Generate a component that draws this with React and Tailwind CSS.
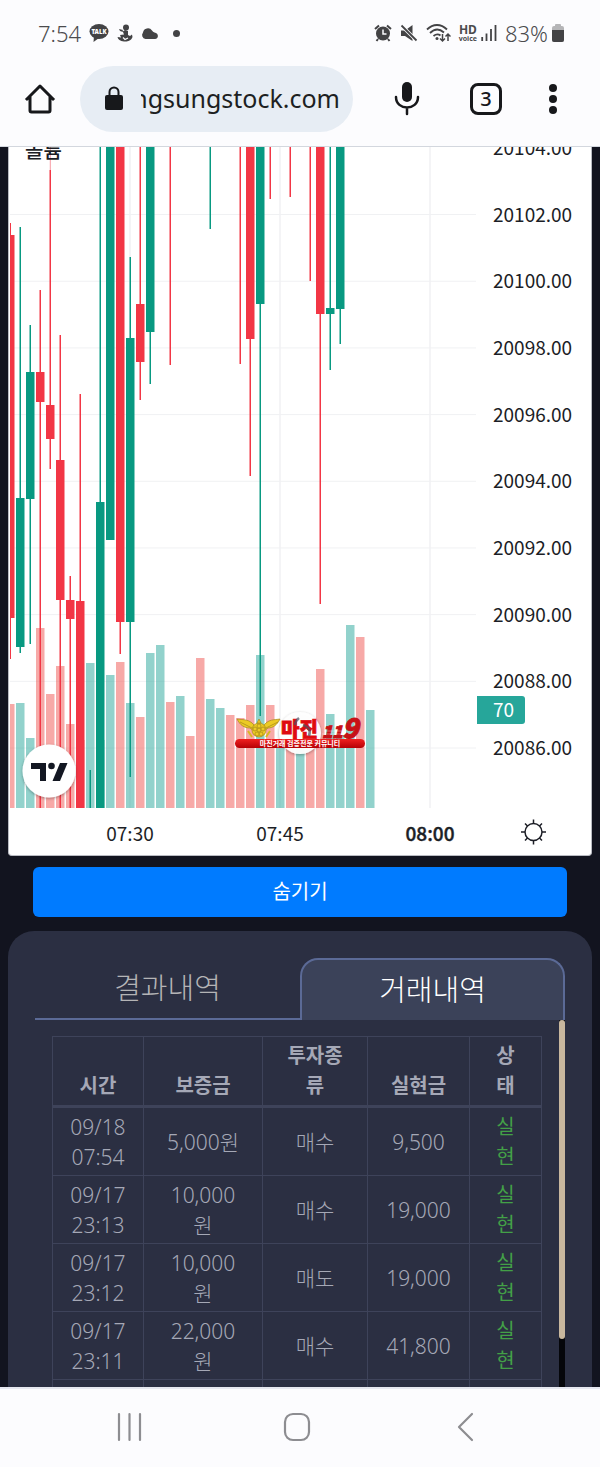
import React, { useState } from 'react';

const UP = '#089981';
const DOWN = '#f23645';

// x, direction, wick top, wick bottom, body top, body bottom
const candles = [
  [10, 'down', 223, 659, 235, 618],
  [20, 'up', 227, 653, 498, 647],
  [30, 'up', 325, 644, 372, 499],
  [40, 'down', 290, 808, 372, 402],
  [50, 'down', 170, 469, 405, 439],
  [60, 'down', 335, 808, 460, 600],
  [70, 'down', 576, 808, 600, 619],
  [80, 'down', 394, 808, 601, 808],
  [90, 'up', 770, 808],
  [100, 'up', 147, 808, 502, 808],
  [110, 'up', 147, 540, 147, 540],
  [120, 'down', 147, 654, 147, 622],
  [130, 'up', 257, 777, 338, 622],
  [140, 'down', 147, 400, 304, 362],
  [150, 'up', 147, 384, 147, 332],
  [170, 'down', 147, 365],
  [210, 'up', 147, 229],
  [240, 'down', 147, 364],
  [250, 'down', 147, 476, 147, 339],
  [260, 'up', 147, 716, 147, 304],
  [270, 'down', 147, 199],
  [290, 'down', 147, 197],
  [310, 'down', 147, 281],
  [320, 'down', 147, 604, 147, 314],
  [330, 'up', 147, 370, 308, 314],
  [340, 'up', 147, 344, 147, 309],
];

const volumes = [
  ['down', 704], ['up', 703], ['up', 738], ['down', 628], ['down', 694], ['down', 666],
  ['down', 724], ['down', 740], ['up', 663], ['up', 740], ['up', 675], ['down', 662],
  ['up', 703], ['down', 717], ['up', 653], ['up', 645], ['down', 702], ['up', 696],
  ['down', 736], ['down', 658], ['up', 699], ['up', 708], ['down', 715], ['down', 718],
  ['down', 705], ['up', 655], ['down', 705], ['up', 740], ['down', 740], ['up', 740],
  ['down', 740], ['down', 669], ['up', 714], ['up', 735], ['up', 625], ['down', 637],
  ['up', 710],
];

const prices = [20104, 20102, 20100, 20098, 20096, 20094, 20092, 20090, 20088, 20086];
const priceY = (price) => 748 - (price - 20086) * 33.34;

const trades = [
  { date: '09/18', time: '07:54', margin: '5,000원', type: '매수', amount: '9,500' },
  { date: '09/17', time: '23:13', margin: '10,000원', type: '매수', amount: '19,000' },
  { date: '09/17', time: '23:12', margin: '10,000원', type: '매도', amount: '19,000' },
  { date: '09/17', time: '23:11', margin: '22,000원', type: '매수', amount: '41,800' },
  { date: '09/17', time: '23:10', margin: '22,000원', type: '매수', amount: '41,800' },
];

const StatusBar = () => (
  <div className="flex h-[66px] items-center justify-between pl-[38px] pr-9 text-[#4b4b4d]">
    <div className="flex items-center gap-2">
      <span className="text-[22px] font-light">7:54</span>
      <svg width="20" height="20" viewBox="0 0 20 20" fill="#434345">
        <ellipse cx="10" cy="8.500" rx="9.500" ry="7.500" />
        <path d="M5 13 4.500 19 10 15Z" />
        <text x="10" y="11" textAnchor="middle" fontSize="6" fontWeight="900" fill="#fff">TALK</text>
      </svg>
      <svg width="16" height="18" viewBox="0 0 16 18" fill="#434345">
        <circle cx="9" cy="3.500" r="3" />
        <path d="M2 5 6 6 5 8 8 6 11 7 11 11 13 12 15 10.500 15.500 13C14 17 10 18 7 17.500 3 17 1 15.500.500 13L4 13.500 3 11 7 10.500 6 8 3 7Z" />
        <path d="M6 13.500 8 15.500 11 14" stroke="#fcfcfe" strokeWidth="1.200" fill="none" />
      </svg>
      <svg width="18" height="14" viewBox="0 0 18 14" fill="#434345">
        <path d="M4.500 13A4 4 0 0 1 2 6.500 5 5 0 0 1 11 4.500 4.500 4.500 0 0 0 13.500 6.500C18 7 18 13 14 13Z" />
      </svg>
      <span className="ml-1.5 size-[7px] rounded-full bg-[#434345]" />
    </div>
    <div className="flex items-center gap-2">
      <svg width="18" height="18" viewBox="0 0 18 18" fill="none" stroke="#434345">
        <circle cx="9" cy="9.500" r="7" fill="#434345" stroke="none" />
        <path d="M1 5 5 1.500M17 5 13 1.500M4 15 2.500 17M14 15 15.500 17" strokeWidth="2" />
        <path d="M9 5.500V10H12.500" stroke="#fcfcfe" strokeWidth="1.500" />
      </svg>
      <svg width="18" height="18" viewBox="0 0 18 18" fill="#434345">
        <path d="M1 6.500H5L12.500 1V17L5 12H1Z" />
        <path d="M1 1 17 17" stroke="#fcfcfe" strokeWidth="3.500" />
        <path d="M1.500 1.500 16.500 16.500" stroke="#434345" strokeWidth="1.800" />
      </svg>
      <div className="flex items-center gap-1">
        <svg width="25" height="20" viewBox="0 0 25 20" fill="none" stroke="#434345" strokeWidth="1.800">
          <path d="M1 6.500C7 .500 15 .500 21 6.500M4 10C8.500 5.500 13.500 5.500 18 9.500M7.500 13C10 11 12.500 11 14.500 12.500" />
          <circle cx="11" cy="15.500" r="1.500" fill="#434345" stroke="none" />
          <path d="M16.500 11V18M14 15.500 16.500 18 19 15.500M22 18V11M19.500 13.500 22 11 24.500 13.500" strokeWidth="1.500" />
        </svg>
        <span className="ml-1 flex flex-col items-center font-bold">
          <span className="text-[12px] leading-[11px]">HD</span>
          <span className="text-[7px] leading-[7px]">voice</span>
        </span>
        <svg width="16" height="18" viewBox="0 0 16 18" stroke="#434345" strokeWidth="1.800">
          <path d="M1.200 13V17M5.500 9.500V17M10 5V17" />
          <path d="M14.500 1V17" />
        </svg>
      </div>
      <span className="flex items-center gap-1 text-[22px] font-light">
        83%
        <svg width="12" height="18" viewBox="0 0 12 18">
          <rect x="3" y="0" width="6" height="4" rx="1" fill="#b5b5b7" />
          <rect x="0" y="2" width="12" height="16" rx="2" fill="#b5b5b7" />
          <path d="M0 6H12V16A2 2 0 0 1 10 18H2A2 2 0 0 1 0 16Z" fill="#434345" />
        </svg>
      </span>
    </div>
  </div>
);

const AddressBar = () => {
  const [url, setUrl] = useState('ngsungstock.com');

  return (
    <div className="flex items-center pl-6 pr-[43px]">
      <button type="button" aria-label="Home" className="size-8 shrink-0">
        <svg viewBox="0 0 32 32" fill="none" stroke="#17181b" strokeWidth="3" strokeLinejoin="round" strokeLinecap="square">
          <path d="M3 16 16 3 29 16M6 15V27.500Q6 29 7.500 29H24.500Q26 29 26 27.500V15" />
        </svg>
      </button>
      <div className="ml-6 flex h-[66px] min-w-0 flex-1 items-center rounded-full bg-[#e7edf4] pl-6 pr-[13px]">
        <svg viewBox="0 0 20 26" className="h-[26px] w-5 shrink-0" fill="#17181b">
          <rect x="1" y="9" width="18" height="15" rx="2" />
          <path d="M5.500 10V6A4.500 4.500 0 0 1 14.500 6V10" fill="none" stroke="#17181b" strokeWidth="2" />
        </svg>
        <div className="ml-[17px] flex min-w-0 flex-1 justify-end overflow-hidden">
          <input
            aria-label="Address"
            value={url}
            onChange={(e) => setUrl(e.target.value)}
            className="w-[240px] shrink-0 bg-transparent text-right text-[25px] text-[#1d1f22] outline-none"
          />
        </div>
      </div>
      <div className="ml-[38px] flex items-center gap-[47px]">
        <button type="button" aria-label="Voice search" className="h-9 w-8">
          <svg viewBox="0 0 32 36" fill="none" stroke="#17181b" strokeWidth="2.500" strokeLinecap="round">
            <rect x="11" y="1" width="10" height="20" rx="5" fill="#17181b" stroke="none" />
            <path d="M5 16C5 30 27 30 27 16M16 27V33" />
          </svg>
        </button>
        <button type="button" aria-label="Tabs" className="flex size-8 items-center justify-center rounded-lg border-[3px] border-[#17181b] text-xl font-medium text-[#17181b]">
          3
        </button>
        <button type="button" aria-label="Menu" className="flex flex-col gap-[3px]">
          <span className="size-2 rounded-full bg-[#17181b]" />
          <span className="size-2 rounded-full bg-[#17181b]" />
          <span className="size-2 rounded-full bg-[#17181b]" />
        </button>
      </div>
    </div>
  );
};

const MarginLogo = () => (
  <g>
    <circle cx="300" cy="733" r="21" fill="#fff" fillOpacity="0.95" filter="url(#soft)" />
    <g fill="#ecca24" stroke="#a3861a" strokeWidth="0.700">
      <path d="M254 725C249 719 244 720 237 719 240 725 244 728 250 728L254 731ZM264 725C269 719 274 720 280 719 277 725 273 728 268 728L264 731Z" />
      <path d="M240 722 252 728M278 722 266 728" fill="none" />
      <path d="M248 731 252 737M270 731 266 737" fill="none" stroke="#d9b820" strokeWidth="2" />
      <circle cx="259" cy="730" r="7" />
      <path d="M259 719 261 723 257 723Z" />
      <circle cx="259" cy="730" r="2" />
      <circle cx="259" cy="726" r="2" />
      <circle cx="263" cy="729" r="2" />
      <circle cx="261" cy="734" r="2" />
      <circle cx="257" cy="734" r="2" />
      <circle cx="255" cy="729" r="2" />
    </g>
    <text x="281" y="737" fontSize="20" fontWeight="900" fill="#df0a10" stroke="#df0a10" strokeWidth="0.800">마진</text>
    <path d="M295 725A10 10 0 0 1 299 718M303 725Q312 728 309 736" fill="none" stroke="#4b5163" strokeWidth="2.500" strokeOpacity="0.700" />
    <g fill="#c71116" stroke="#c71116" strokeWidth="1" fontStyle="italic" fontWeight="900">
      <text x="322" y="738" fontSize="17">11</text>
      <text x="342" y="738" fontSize="27">9</text>
    </g>
    <path d="M322 734H345M324 731H346" stroke="#fff" strokeWidth="0.600" strokeOpacity="0.600" />
    <rect x="235" y="739" width="130" height="9" rx="4.500" fill="url(#ribbon)" />
    <text x="300" y="746" textAnchor="middle" fontSize="7" fontWeight="700" fill="#fff">마진거래 검증전문 커뮤니티</text>
  </g>
);

const Chart = () => (
  <div className="overflow-hidden rounded-b-sm border-x border-b border-[#b9bbc2] bg-white">
    <svg viewBox="9 147 582 708" className="block w-full font-['Noto_Sans_CJK_KR',sans-serif]">
      <defs>
        <clipPath id="plot">
          <rect x="10" y="147" width="466" height="661" />
        </clipPath>
        <filter id="soft" x="-30%" y="-30%" width="160%" height="160%">
          <feDropShadow dx="0" dy="1" stdDeviation="1.500" floodOpacity="0.350" />
        </filter>
        <linearGradient id="ribbon" x1="0" y1="0" x2="0" y2="1">
          <stop offset="0" stopColor="#f02020" />
          <stop offset="1" stopColor="#b60006" />
        </linearGradient>
      </defs>

      <g clipPath="url(#plot)">
        <g stroke="#f0f1f3">
          {prices.slice(1).map((p) => <path key={p} d={`M10 ${priceY(p)}H476`} />)}
          {[130, 280, 430].map((x) => <path key={x} d={`M${x} 147V808`} strokeWidth="1.500" />)}
        </g>
        {volumes.map(([dir, top], i) => (
          <rect key={i} x={i * 10 + 6} y={top} width="8.500" height={808 - top} fill={dir === 'up' ? '#26a69a' : '#ef5350'} fillOpacity="0.500" />
        ))}
        <path d="M50.300 147V170" stroke={DOWN} strokeOpacity="0.500" />
        {candles.map(([x, dir, high, low, top, bottom]) => (
          <g key={x} fill={dir === 'up' ? UP : DOWN}>
            <rect x={x - 0.500} y={high} width="1.500" height={low - high} />
            {top && <rect x={x - 4} y={top} width="8.500" height={bottom - top} />}
          </g>
        ))}
      </g>

      <g fontSize="19" fill="#1c1e26">
        <text x="25" y="158" fontSize="20" fontWeight="500">볼륨</text>
        {prices.map((p) => <text key={p} x="493" y={priceY(p) + 7}>{p.toFixed(2)}</text>)}
        <g textAnchor="middle">
          <text x="130" y="841">07:30</text>
          <text x="280" y="841">07:45</text>
          <text x="430" y="841" fontWeight="500" stroke="#1c1e26" strokeWidth="0.400">08:00</text>
        </g>
        <path d="M477 696H522Q525 696 525 699V721Q525 724 522 724H477Z" fill="#26a69a" />
        <text x="493" y="717" fill="#fff">70</text>
      </g>

      <g fill="none" stroke="#1c1e26" strokeWidth="1.500">
        <circle cx="533.500" cy="832" r="8.500" />
        <path d="M533.500 819.500V823M533.500 841V844.500M521 832H525M542 832H546M525 823.500 527.500 826M539.500 838 542 840.500M542 823.500 539.500 826M527.500 838 525 840.500" />
      </g>

      <circle cx="49" cy="771" r="26.500" fill="#fff" filter="url(#soft)" />
      <g fill="#131722">
        <path d="M31 763H46V781H40V769H31Z" />
        <circle cx="51.500" cy="766" r="3.300" />
        <path d="M60 763H67.500L60 781H52.500Z" />
      </g>
      <MarginLogo />
    </svg>
  </div>
);

const TradeTable = () => {
  const head = 'border border-[#3e435a] px-3 py-1';
  const cell = 'border border-[#3e435a] px-2 pt-1 pb-[3px] text-center';

  return (
    <table className="w-full table-fixed border-collapse text-[#a5a8b6]">
      <colgroup>
        <col className="w-[91px]" />
        <col className="w-[119px]" />
        <col className="w-[105px]" />
        <col className="w-[102px]" />
        <col className="w-[72px]" />
      </colgroup>
      <thead className="align-bottom text-xl leading-[30px]">
        <tr className="border-b-[3px] border-[#3e435a]">
          <th className={head}>시간</th>
          <th className={head}>보증금</th>
          <th className={head}>투자종<br />류</th>
          <th className={head}>실현금</th>
          <th className={head}>상<br />태</th>
        </tr>
      </thead>
      <tbody className="text-[21px] font-light leading-[30px]">
        {trades.map((t) => (
          <tr key={t.time}>
            <td className={cell}>{t.date}<br />{t.time}</td>
            <td className={cell}>
              {t.margin.length > 6 ? <>{t.margin.slice(0, -1)}<br />원</> : t.margin}
            </td>
            <td className={cell}>{t.type}</td>
            <td className={cell}>{t.amount}</td>
            <td className={`${cell} text-xl/[30px] font-normal text-[#43a047]`}>실<br />현</td>
          </tr>
        ))}
      </tbody>
    </table>
  );
};

const HistoryPanel = () => {
  const [tab, setTab] = useState('trades');
  const active = 'rounded-t-[18px] border-2 border-b-0 border-[#5b6a96] bg-[#3b4259] text-white';
  const idle = 'border-b-2 border-[#5b6a96] text-[#b4b4b6]';

  return (
    <section className="flex min-h-0 flex-1 flex-col rounded-t-[26px] bg-[#2b2f42] px-[27px] pt-[27px]">
      <div role="tablist" className="grid h-[62px] shrink-0 grid-cols-2 text-[29px] font-light">
        <button type="button" role="tab" aria-selected={tab === 'results'} onClick={() => setTab('results')} className={tab === 'results' ? active : idle}>
          결과내역
        </button>
        <button type="button" role="tab" aria-selected={tab === 'trades'} onClick={() => setTab('trades')} className={tab === 'trades' ? active : idle}>
          거래내역
        </button>
      </div>
      <div className="flex min-h-0 flex-1 overflow-hidden">
        <div className="flex-1 px-[17px] pt-4">
          <TradeTable />
        </div>
        <div className="w-[7px] bg-[#05060a]">
          <div className="h-[87%] rounded-full bg-[#c8b79e]" />
        </div>
      </div>
    </section>
  );
};

const NavBar = () => (
  <nav className="grid h-20 shrink-0 grid-cols-3 place-items-center border-t-2 border-[#e6e8f0] bg-[#fcfcfe] pb-[3px] pl-[45px] pr-[51px] text-[#8d8d91]">
    <button type="button" aria-label="Recents">
      <svg width="28" height="30" viewBox="0 0 28 30" stroke="currentColor" strokeWidth="2.200" strokeLinecap="round">
        <path d="M4 2V28M14.500 2V28M25 2V28" />
      </svg>
    </button>
    <button type="button" aria-label="Home screen">
      <svg width="28" height="30" viewBox="0 0 28 30" fill="none" stroke="currentColor" strokeWidth="2.200">
        <rect x="2" y="2" width="24" height="26" rx="8" />
      </svg>
    </button>
    <button type="button" aria-label="Back">
      <svg width="28" height="30" viewBox="0 0 28 30" fill="none" stroke="currentColor" strokeWidth="2.200" strokeLinecap="round" strokeLinejoin="round">
        <path d="M21 2 8 15 21 28" />
      </svg>
    </button>
  </nav>
);

const App = () => {
  const [hidden, setHidden] = useState(false);

  return (
    <div className="flex h-screen flex-col bg-[#12141f] font-['Noto_Sans','Noto_Sans_CJK_KR',sans-serif]">
      <header className="h-[147px] shrink-0 border-b border-[#d3d7de] bg-[#fcfcfe]">
        <StatusBar />
        <AddressBar />
      </header>
      <main className="flex min-h-0 flex-1 flex-col overflow-hidden px-2">
        {!hidden && <Chart />}
        <button
          type="button"
          onClick={() => setHidden(!hidden)}
          className="mx-[25px] mb-[14px] mt-[11px] h-[50px] shrink-0 rounded-md bg-[#007bff] text-xl text-white"
        >
          숨기기
        </button>
        <HistoryPanel />
      </main>
      <NavBar />
    </div>
  );
};

export default App;
